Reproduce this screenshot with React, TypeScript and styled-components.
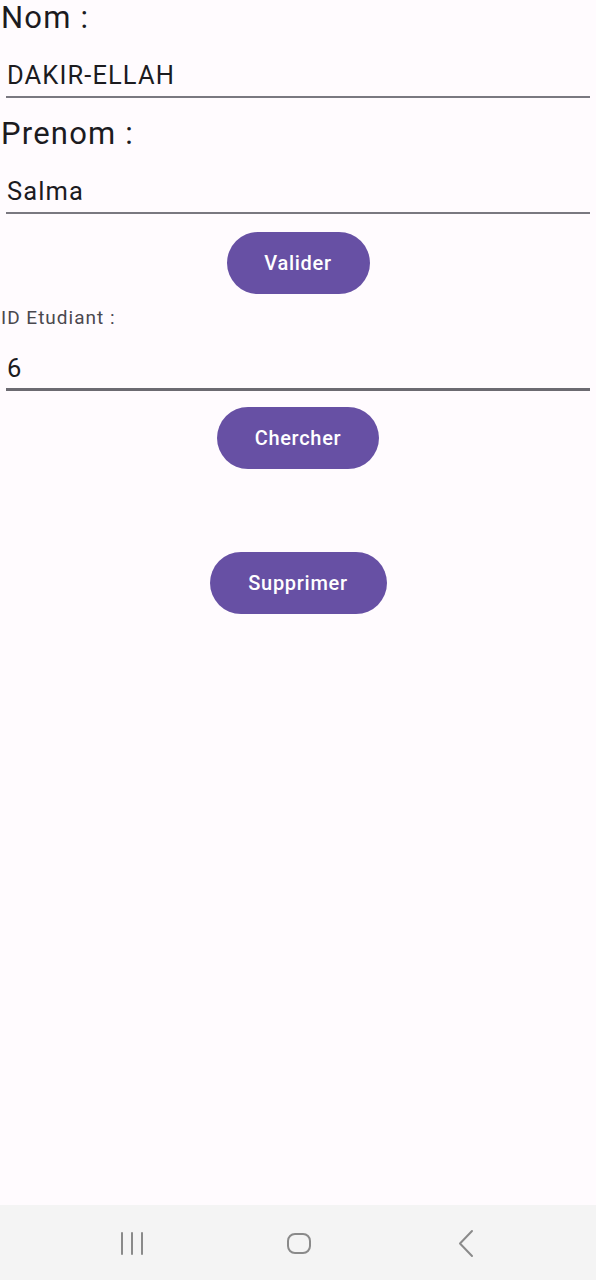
import React from "react";
import styled, { createGlobalStyle } from "styled-components";

const GlobalStyle = createGlobalStyle`
  html, body {
    margin: 0;
    padding: 0;
    background: #fffbfe;
  }
  #root {
    min-height: 1280px;
  }
`;

const Screen = styled.div`
  display: flex;
  flex-direction: column;
  width: 596px;
  height: 1280px;
  background: #fffbfe;
  font-family: Roboto, "Noto Sans", sans-serif;
  color: #1c1b1f;
`;

const Content = styled.main`
  flex: 1;
  display: flex;
  flex-direction: column;
`;

const Label = styled.div<{ $small?: boolean; $gap?: number }>`
  margin-top: ${(p) => p.$gap ?? 0}px;
  padding-left: 1px;
  font-size: ${(p) => (p.$small ? 19 : 31)}px;
  line-height: ${(p) => (p.$small ? 20 : 35)}px;
  letter-spacing: ${(p) => (p.$small ? 1 : 1.2)}px;
  color: ${(p) => (p.$small ? "#4a484e" : "#1c1b1f")};
`;

const Field = styled.div<{ $thick?: boolean }>`
  margin: 0 6px;
  padding: 25px 0 ${(p) => (p.$thick ? 5 : 6)}px 1px;
  border-bottom: ${(p) => (p.$thick ? "3px solid #6c6a71" : "2px solid #7a7880")};
`;

const Value = styled.div`
  font-size: 25.5px;
  line-height: 30px;
  letter-spacing: 1.1px;
  color: #1c1b1f;
`;

const ButtonRow = styled.div<{ $gap: number }>`
  display: flex;
  justify-content: center;
  margin-top: ${(p) => p.$gap}px;
`;

const PillButton = styled.button<{ $width: number }>`
  width: ${(p) => p.$width}px;
  height: 62px;
  border: none;
  border-radius: 31px;
  background: #6750a4;
  color: #ffffff;
  font-family: Roboto, "Noto Sans", sans-serif;
  font-weight: 500;
  font-size: 20px;
  letter-spacing: 0.7px;
  padding: 0;
  cursor: pointer;
`;

const NavBar = styled.nav`
  height: 75px;
  background: #f4f4f4;
  display: flex;
  align-items: center;
  justify-content: center;
  position: relative;
`;

const NavSlot = styled.div<{ $x: number }>`
  position: absolute;
  left: ${(p) => p.$x}px;
  top: 24px;
  width: 30px;
  height: 30px;
  display: flex;
  align-items: center;
  justify-content: center;
`;

const RecentsIcon = () => (
  <svg width="30" height="30" viewBox="0 0 30 30">
    <g stroke="#8a8a8a" strokeWidth="2" strokeLinecap="round">
      <line x1="5" y1="4" x2="5" y2="25" />
      <line x1="15" y1="4" x2="15" y2="25" />
      <line x1="25" y1="4" x2="25" y2="25" />
    </g>
  </svg>
);

const HomeIcon = () => (
  <svg width="30" height="30" viewBox="0 0 30 30">
    <rect x="4" y="5" width="22" height="19" rx="7" fill="none" stroke="#8a8a8a" strokeWidth="2" />
  </svg>
);

const BackIcon = () => (
  <svg width="30" height="30" viewBox="0 0 30 30">
    <polyline points="21,2 9,14.5 21,27" fill="none" stroke="#8a8a8a" strokeWidth="2" strokeLinecap="round" strokeLinejoin="round" />
  </svg>
);

export default function App() {
  return (
    <>
      <GlobalStyle />
      <Screen>
        <Content>
          <Label>Nom :</Label>
          <Field>
            <Value>DAKIR-ELLAH</Value>
          </Field>
          <Label $gap={18}>Prenom :</Label>
          <Field>
            <Value>Salma</Value>
          </Field>
          <ButtonRow $gap={18}>
            <PillButton $width={143}>Valider</PillButton>
          </ButtonRow>
          <Label $small $gap={14}>ID Etudiant :</Label>
          <Field $thick>
            <Value>6</Value>
          </Field>
          <ButtonRow $gap={16}>
            <PillButton $width={162}>Chercher</PillButton>
          </ButtonRow>
          <ButtonRow $gap={83}>
            <PillButton $width={177}>Supprimer</PillButton>
          </ButtonRow>
        </Content>
        <NavBar>
          <NavSlot $x={117}>
            <RecentsIcon />
          </NavSlot>
          <NavSlot $x={284}>
            <HomeIcon />
          </NavSlot>
          <NavSlot $x={451}>
            <BackIcon />
          </NavSlot>
        </NavBar>
      </Screen>
    </>
  );
}
